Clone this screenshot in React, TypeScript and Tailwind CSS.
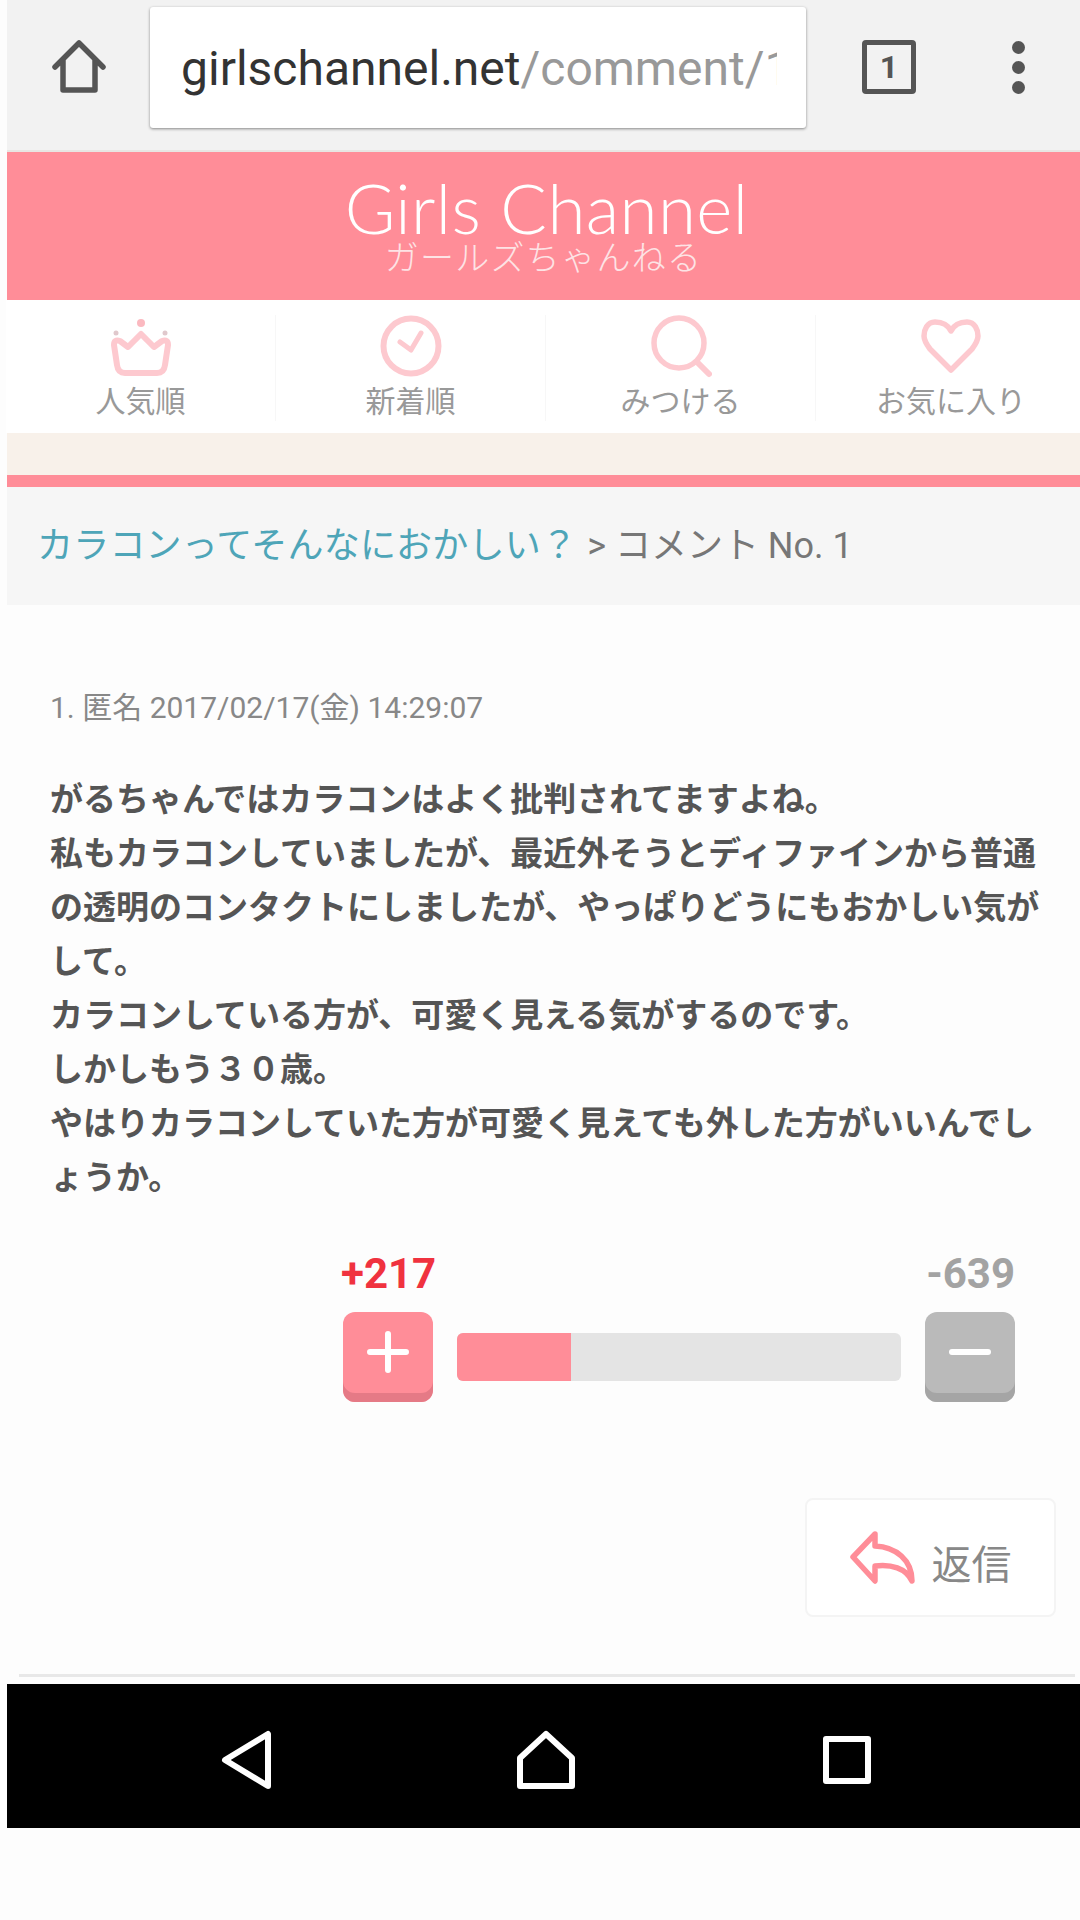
const jp = "font-['Roboto','Noto_Sans_CJK_JP',sans-serif]";

function HomeIcon() {
  return (
    <svg width="54" height="56" viewBox="0 0 54 56" fill="none">
      <path
        d="M3 28 L27 4 L51 28 M11 21 V51 H43 V21"
        stroke="#555555"
        strokeWidth="5.5"
        strokeLinejoin="round"
        strokeLinecap="round"
      />
    </svg>
  );
}

function CrownIcon() {
  return (
    <svg width="62" height="62" viewBox="0 0 62 62" fill="none" stroke="#fdc9cf" strokeWidth="6" strokeLinejoin="round">
      <path d="M31 19 L44 32 L52 26 Q58 24 58 30 L55 50 Q54 58 47 58 H15 Q8 58 7 50 L4 30 Q4 24 10 26 L18 32 Z" />
      <circle cx="31" cy="8" r="4" fill="#fbb9c0" stroke="none" />
      <circle cx="6" cy="18" r="2.5" fill="#e0c8cc" stroke="none" />
      <circle cx="55" cy="18" r="2.5" fill="#e0c8cc" stroke="none" />
    </svg>
  );
}

function ClockIcon() {
  return (
    <svg width="62" height="62" viewBox="0 0 62 62" fill="none" stroke="#fdc9cf">
      <circle cx="31" cy="31" r="27.5" strokeWidth="6" />
      <path d="M20 27 L31 35 L41 18" strokeWidth="5" strokeLinecap="round" strokeLinejoin="round" />
    </svg>
  );
}

function SearchIcon() {
  return (
    <svg width="62" height="64" viewBox="0 0 62 64" fill="none" stroke="#fdc9cf" strokeLinecap="round">
      <circle cx="29" cy="29" r="25" strokeWidth="5.5" />
      <path d="M47 48 L59 60" strokeWidth="6" />
    </svg>
  );
}

function HeartIcon() {
  return (
    <svg width="62" height="58" viewBox="0 0 62 58" fill="none" stroke="#fdc9cf" strokeWidth="5.5" strokeLinejoin="round">
      <path d="M31 14 C27 6 20 5 15 5 C7 5 4 13 4 19 C4 24 7 28 10 32 L31 53 L52 32 C55 28 58 24 58 19 C58 13 55 5 47 5 C42 5 35 6 31 14 Z" />
    </svg>
  );
}

function NavItem({ icon, label, last }: { icon: React.ReactNode; label: string; last?: boolean }) {
  return (
    <div className={`flex h-[106px] w-[270px] shrink-0 flex-col items-center justify-between ${last ? "" : "border-r border-[#f7f7f7]"}`}>
      <div className="flex h-[62px] items-center">{icon}</div>
      <div className="text-[30px] leading-[38px] text-[#999999]">{label}</div>
    </div>
  );
}

export default function App() {
  return (
    <div className={`flex h-[1920px] w-[1080px] flex-col overflow-hidden bg-[#fdfdfd] pl-[7px] ${jp}`}>
      {/* browser toolbar */}
      <div className="flex h-[152px] items-center border-b-2 border-[#e8e6e3] bg-[#f2f2f2] pb-[16px]">
        <div className="flex w-[143px] justify-center">
          <HomeIcon />
        </div>
        <div className="flex h-[121px] w-[656px] items-center overflow-hidden rounded-[3px] bg-white pl-[31px] pr-[29px] shadow-[0_1px_3px_rgba(0,0,0,0.45)]">
          <div className="overflow-hidden whitespace-nowrap pt-[3px] text-[48px] text-[#333333]">
            girlschannel.net<span className="text-[#999999]">/comment/1234</span>
          </div>
        </div>
        <div className="ml-[56px] flex h-[54px] w-[54px] items-center justify-center rounded-[4px] border-[5px] border-[#555555] font-bold text-[#555555]">
          <span className="text-[32px] leading-none">1</span>
        </div>
        <div className="ml-[96px] flex flex-col gap-[7px]">
          <div className="h-[13px] w-[13px] rounded-full bg-[#555555]" />
          <div className="h-[13px] w-[13px] rounded-full bg-[#555555]" />
          <div className="h-[13px] w-[13px] rounded-full bg-[#555555]" />
        </div>
      </div>

      {/* site header */}
      <div className="flex h-[148px] flex-col items-center bg-[#ff8d98] pt-[23px]">
        <div className="ml-[6px] font-['Lato'] text-[69px] font-light leading-[65px] tracking-[0.4px] text-white">
          Girls Channel
        </div>
        <div className="text-[34px] font-light leading-[36px] tracking-[1.3px] text-[#fde3e5]">
          ガールズちゃんねる
        </div>
      </div>

      {/* nav */}
      <div className="-ml-[1px] flex h-[133px] items-center bg-white pt-[3px]">
        <NavItem icon={<CrownIcon />} label="人気順" />
        <NavItem icon={<ClockIcon />} label="新着順" />
        <NavItem icon={<SearchIcon />} label="みつける" />
        <NavItem icon={<HeartIcon />} label="お気に入り" last />
      </div>

      <div className="h-[42px] bg-[#f8f1ea]" />
      <div className="h-[12px] bg-[#ff8d98]" />

      {/* breadcrumb */}
      <div className="flex h-[118px] items-center bg-[#f6f6f6] pl-[30px] text-[#777777]">
        <span className="text-[36px] tracking-[0.2px] text-[#4ea5b8]">カラコンってそんなにおかしい？</span>
        <span className="ml-[10px] text-[36px]">&gt; コメント No. 1</span>
      </div>

      {/* comment */}
      <div className="relative flex flex-1 flex-col">
        <div className="pl-[43px] pr-[30px] pt-[85px]">
          <div className="text-[30px] leading-[36px] text-[#888888]">1. 匿名 2017/02/17(金) 14:29:07</div>
          <div className="mt-[47px] text-[33px] font-bold leading-[54px] text-[#555555] [line-break:loose]">
            がるちゃんではカラコンはよく批判されてますよね。
            <br />
            私もカラコンしていましたが、最近外そうとディファインから普通の透明のコンタクトにしましたが、やっぱりどうにもおかしい気がして。
            <br />
            カラコンしている方が、可愛く見える気がするのです。
            <br />
            しかしもう３０歳。
            <br />
            やはりカラコンしていた方が可愛く見えても外した方がいいんでしょうか。
          </div>
        </div>

        {/* rating */}
        <div className="ml-[334px] mt-[46px] flex w-[674px] justify-between">
          <div className="text-[42px] font-bold leading-[46px] text-[#f0323f]">+217</div>
          <div className="text-[42px] font-bold leading-[46px] text-[#a3a3a3]">-639</div>
        </div>
        <div className="ml-[336px] mt-[15px] flex w-[672px] items-center justify-between">
          <div className="flex h-[90px] w-[90px] items-start justify-center rounded-[12px] bg-[#ff8d98] pt-[19px] shadow-[inset_0_-9px_0_#e57a86]">
            <svg width="42" height="42" viewBox="0 0 42 42" fill="none" stroke="#ffffff" strokeWidth="6" strokeLinecap="round">
              <path d="M21 3 V39 M3 21 H39" />
            </svg>
          </div>
          <div className="flex h-[48px] w-[444px] overflow-hidden rounded-[6px] bg-[#e4e4e4]">
            <div className="w-[114px] bg-[#ff8d98]" />
          </div>
          <div className="flex h-[90px] w-[90px] items-start justify-center rounded-[12px] bg-[#bababa] pt-[37px] shadow-[inset_0_-9px_0_#a5a5a5]">
            <div className="h-[6px] w-[42px] rounded-full bg-white" />
          </div>
        </div>

        {/* reply */}
        <div className="mt-[96px] flex justify-end pr-[24px]">
          <div className="flex h-[119px] w-[251px] items-center justify-center gap-[16px] rounded-[8px] border-2 border-[#f4f4f4] bg-white">
            <svg width="66" height="54" viewBox="0 0 66 54" fill="none" stroke="#ff8d98" strokeWidth="5.5" strokeLinejoin="round">
              <path d="M25 3 L3 26 L25 50 V35 C41 33 56 37 62 50 C62 29 46 16 25 15 Z" />
            </svg>
            <span className="pt-[16px] text-[40px] leading-none text-[#888888]">返信</span>
          </div>
        </div>

        <div className="absolute left-[12px] right-[5px] top-[1069px] h-[3px] bg-[#e8e8e8]" />
      </div>

      {/* android nav */}
      <div className="mb-[92px] flex h-[144px] items-center bg-black pt-[8px]">
        <div className="ml-[214px]">
          <svg width="52" height="60" viewBox="0 0 52 60" fill="none" stroke="#ffffff" strokeWidth="6" strokeLinejoin="round">
            <path d="M47 4 V56 L4 30 Z" />
          </svg>
        </div>
        <div className="ml-[244px]">
          <svg width="58" height="60" viewBox="0 0 58 60" fill="none" stroke="#ffffff" strokeWidth="6" strokeLinejoin="round">
            <path d="M29 4 L55 28 V56 H3 V28 Z" />
          </svg>
        </div>
        <div className="ml-[248px] h-[48px] w-[48px] rounded-[3px] border-[6px] border-white" />
      </div>
    </div>
  );
}
